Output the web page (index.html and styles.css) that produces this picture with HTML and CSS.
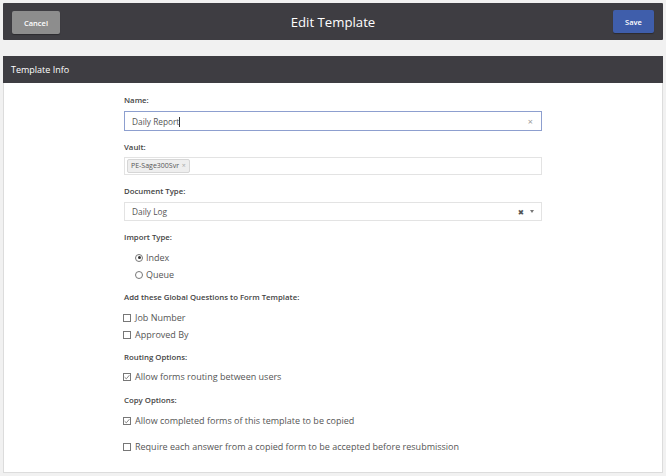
FILE: index.html
```html
<!DOCTYPE html>
<html>
<head>
<meta charset="utf-8">
<link rel="stylesheet" href="styles.css">
</head>
<body>
<div class="topbar">
  <div class="tb-left"><button class="btn btn-cancel">Cancel</button></div>
  <div class="tb-title">Edit Template</div>
  <div class="tb-right"><button class="btn btn-save">Save</button></div>
</div>
<div class="panel">
  <div class="panel-head">Template Info</div>
  <div class="panel-body">
    <div class="form">
      <div class="label">Name:</div>
      <div class="input input-focus"><span class="val">Daily Report<span class="caret"></span></span><span class="clear">×</span></div>

      <div class="label l2">Vault:</div>
      <div class="input input-tags"><span class="tag">PE-Sage300Svr <span class="tag-x">×</span></span></div>

      <div class="label l2">Document Type:</div>
      <div class="input input-select"><span class="val">Daily Log</span><span class="sel-icons"><span class="sel-x">✖</span><span class="sel-arrow"></span></span></div>

      <div class="label l3">Import Type:</div>
      <div class="radios">
        <div class="opt"><span class="radio on"></span>Index</div>
        <div class="opt"><span class="radio"></span>Queue</div>
      </div>

      <div class="label l4">Add these Global Questions to Form Template:</div>
      <div class="checks">
        <div class="opt"><span class="cb"></span>Job Number</div>
        <div class="opt"><span class="cb"></span>Approved By</div>
      </div>

      <div class="label l4">Routing Options:</div>
      <div class="checks checks-tight">
        <div class="opt"><span class="cb"><svg viewBox="0 0 8 8" width="8" height="8"><path d="M1.6 4.2 L3.3 5.8 L6.4 2.2" fill="none" stroke="#777" stroke-width="0.9"/></svg></span>Allow forms routing between users</div>
      </div>

      <div class="label l5">Copy Options:</div>
      <div class="checks">
        <div class="opt"><span class="cb"><svg viewBox="0 0 8 8" width="8" height="8"><path d="M1.6 4.2 L3.3 5.8 L6.4 2.2" fill="none" stroke="#777" stroke-width="0.9"/></svg></span>Allow completed forms of this template to be copied</div>
        <div class="opt opt-gap"><span class="cb"></span>Require each answer from a copied form to be accepted before resubmission</div>
      </div>
    </div>
  </div>
</div>
</body>
</html>
```
FILE: styles.css
```css
html, body { margin: 0; padding: 0; }
body {
  background: #f1f1f1;
  padding: 3px 3px 3px 3px;
  font-family: "Open Sans", "DejaVu Sans", sans-serif;
  color: #555;
  height: 476px;
  box-sizing: border-box;
}
.topbar {
  height: 37px;
  background: #3e3d42;
  display: grid;
  grid-template-columns: 1fr auto 1fr;
  align-items: center;
  padding: 0 9px;
  border-radius: 1px;
}
.tb-right { display: flex; justify-content: flex-end; }
.tb-title { color: #fff; font-size: 13.2px; }
.btn {
  border: none;
  color: #fff;
  font-family: "Open Sans", sans-serif;
  font-size: 7.5px;
  font-weight: 600;
  height: 23px;
  border-radius: 2px;
  padding: 0;
  cursor: pointer;
}
.btn-cancel { width: 48px; background: #8d8d8d; box-shadow: 0 1px 1px rgba(0,0,0,0.3); }
.btn-save { width: 41px; background: #3f5eab; box-shadow: 0 1px 1px rgba(0,0,0,0.3); }
.panel {
  margin-top: 16px;
  height: 417px;
  background: #fff;
  border: 1px solid #dcdcdc;
  border-top: none;
  box-sizing: border-box;
  display: flex;
  flex-direction: column;
}
.panel-head {
  height: 27px;
  background: #3e3d42;
  color: #fff;
  font-size: 9px;
  display: flex;
  align-items: center;
  padding-left: 8px;
  margin: 0 -1px;
}
.panel-body { flex: 1; }
.form {
  width: 418px;
  margin: 0 auto;
  padding-top: 11px;
}
.label {
  font-size: 7.8px;
  font-weight: 600;
  color: #444;
  line-height: 12px;
  height: 12px;
}
.l2 { margin-top: 10px; }
.l3 { margin-top: 10px; }
.l4 { margin-top: 8px; }
.l5 { margin-top: 9px; }
.input {
  margin-top: 5px;
  height: 19px;
  border: 1px solid #e3e3e3;
  box-sizing: border-box;
  display: flex;
  align-items: center;
  padding: 0 7px;
  font-size: 8.3px;
  color: #555;
}
.input-focus { height: 20px; border-color: #8d9fcf; }
.input .val { flex: 1; position: relative; }
.caret { display: inline-block; width: 1px; height: 10px; background: #333; vertical-align: -2px; }
.clear { color: #999; font-size: 9px; margin-right: 1px; }
.input-tags { height: 18px; padding: 0 2px; margin-top: 4px; }
.tag {
  background: #eeeeee;
  border: 1px solid #d6d6d6;
  border-radius: 2px;
  font-size: 7px;
  color: #555;
  padding: 1px 3px;
  line-height: 10px;
}
.tag-x { color: #aaa; margin-left: 1px; }
.input-select { margin-top: 5px; }
.sel-icons { display: flex; align-items: center; gap: 6px; }
.sel-x { font-size: 7.5px; color: #555; }
.sel-arrow { width: 0; height: 0; border-left: 2.5px solid transparent; border-right: 2.5px solid transparent; border-top: 3px solid #777; }
.radios { padding-left: 11px; margin-top: 6px; }
.checks { margin-top: 6px; margin-left: -1px; }
.checks-tight { margin-top: 5px; }
.opt {
  display: flex;
  align-items: center;
  height: 17px;
  font-size: 9px;
  color: #555;
}
.radio {
  width: 6px; height: 6px;
  border: 1px solid #777;
  border-radius: 50%;
  margin-right: 3px;
  position: relative;
  flex: none;
}
.radio.on::after {
  content: "";
  position: absolute;
  left: 1.5px; top: 1.5px;
  width: 3px; height: 3px;
  border-radius: 50%;
  background: #333;
}
.cb {
  width: 6px; height: 6px;
  border: 1px solid #777;
  margin-right: 4px;
  flex: none;
  display: flex;
  align-items: center;
  justify-content: center;
  overflow: hidden;
}
.cb svg { flex: none; }
.opt-gap { margin-top: 9px; }
```
